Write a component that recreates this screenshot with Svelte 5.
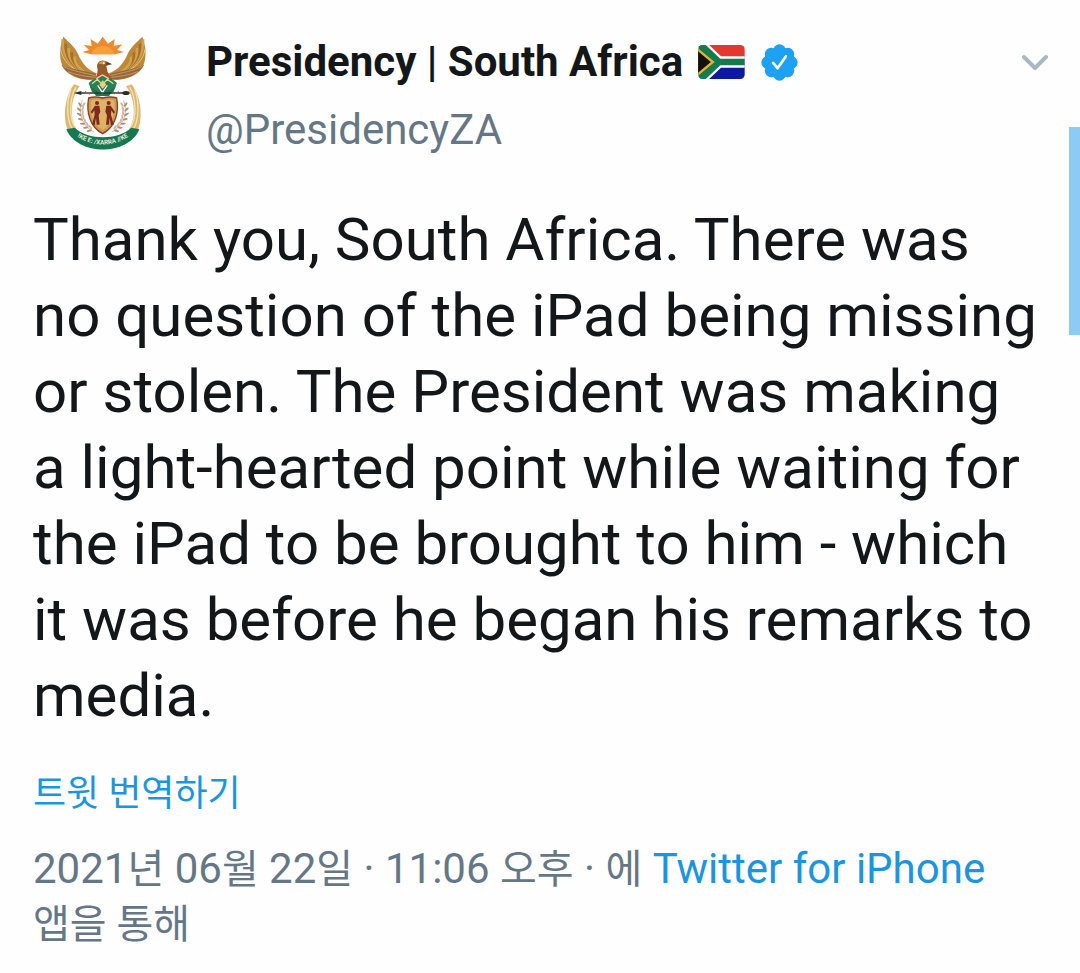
<script>
  const name = "Presidency | South Africa";
  const handle = "@PresidencyZA";
  const text =
    "Thank you, South Africa. There was no question of the iPad being missing or stolen. The President was making a light-hearted point while waiting for the iPad to be brought to him - which it was before he began his remarks to media.";

  const feathers = [0, 1, 2, 3, 4];
  const leaves = [0, 1, 2, 3, 4, 5, 6];
  const scallops = [0, 45, 90, 135, 180, 225, 270, 315];
</script>

<svelte:head>
  <title>{name}</title>
</svelte:head>

{#snippet wing()}
  <path d="M40 38 C26 75 26 118 48 142 C76 166 110 171 136 166 L140 148 C114 138 97 119 85 92 C75 68 54 52 40 38Z" fill="#bd8838" />
  {#each feathers as i}
    <path
      d="M{38 + i * 9} {46 + i * 13} C{36 + i * 9} {76 + i * 10} {46 + i * 10} {114 + i * 6} {96 + i * 8} {146 + i * 3}"
      fill="none"
      stroke={i % 2 ? "#a66f2c" : "#d0a24c"}
      stroke-width="8"
    />
  {/each}
  <path d="M32 76 C36 106 60 134 102 149" fill="none" stroke="#e4c47f" stroke-width="3" />
  <path d="M34 122 C56 134 100 138 138 150 L134 166 C96 168 54 156 34 122Z" fill="#97673a" />
  <path d="M40 127 C66 141 102 146 136 155 M54 143 C80 154 108 157 134 160" fill="none" stroke="#c09a6a" stroke-width="3" />
  <path d="M72 181 C40 222 38 296 58 326 L80 316 C58 284 61 222 89 187Z" fill="#dcb96f" />
  <path d="M63 196 C48 234 50 292 69 319 M78 189 C57 225 57 284 76 311" fill="none" stroke="#f4e2b4" stroke-width="4" />
{/snippet}

{#snippet wheat()}
  <path d="M97 229 C82 260 94 305 132 324" fill="none" stroke="#b99a78" stroke-width="2" />
  {#each leaves as i}
    <g transform="rotate({-i * 12} 158 262)">
      <ellipse cx="90" cy="242" rx="3" ry="8" transform="rotate(-35 90 242)" fill="#b28d70" />
      <ellipse cx="101" cy="242" rx="3" ry="8" transform="rotate(35 101 242)" fill="#d2b59a" />
    </g>
  {/each}
{/snippet}

{#snippet figure()}
  <circle cx="141" cy="237" r="6" />
  <path d="M135 245 L148 245 L151 263 L146 274 L149 302 L140 302 L138 282 L134 304 L126 302 L134 272 L133 259 L126 269 L122 264Z" />
{/snippet}

<main>
  <header>
    <svg class="avatar" viewBox="0 0 315 405" role="img" aria-label="Coat of arms">
      <path
        d="M97 84 L117 78 L101 62 L125 66 L122 45 L143 59 L158 38 L174 59 L194 45 L191 66 L217 61 L201 78 L222 84 L194 91 H124Z"
        fill="#f0892e"
      />
      <path d="M124 91 Q130 68 158 66 Q188 68 194 91Z" fill="#f6a03c" />
      {@render wing()}
      <g transform="translate(317 0) scale(-1 1)">{@render wing()}</g>

      <path d="M140 165 L143 136 C136 116 151 105 167 111 L184 119 L169 126 L173 145 L187 165Z" fill="#985b2a" />
      <path d="M145 119 C151 110 163 109 172 115 L163 121Z" fill="#d49640" />
      <path d="M165 113 L187 121 L170 123Z" fill="#514132" />
      <circle cx="161" cy="118" r="3" fill="#fff" />
      <path d="M145 144 L157 153 L154 166 L136 162Z M174 146 L182 163 L166 166Z" fill="#d7382f" />

      <path d="M116 177 Q157 137 201 177 L190 205 H126Z" fill="#2a8053" />
      <path d="M126 179 L142 166 L157 182 L172 166 L190 179 M139 164 L157 153 L177 164" fill="none" stroke="#d8df9c" stroke-width="4" />
      <path d="M148 182 L158 168 L169 182 L158 194Z" fill="#e9ce73" />
      <path d="M120 188 L157 209 L198 188 L177 216 H138Z" fill="#167750" />
      <path d="M143 184 L157 205 L172 184" fill="none" stroke="#fff" stroke-width="4" />
      <path d="M88 207 H224" stroke="#30302f" stroke-width="5" />
      <path d="M71 207 L94 201 V213Z" fill="#292d2d" />
      <ellipse cx="228" cy="207" rx="11" ry="6" fill="#292d2d" />
      <path d="M105 202 L119 211 M194 210 L206 202" stroke="#a47849" stroke-width="3" />

      {@render wheat()}
      <g transform="translate(317 0) scale(-1 1)">{@render wheat()}</g>

      <path d="M116 222 Q135 216 158 222 Q181 216 200 222 C208 265 196 309 158 329 C120 309 108 265 116 222Z" fill="#cf9855" stroke="#824425" stroke-width="4" />
      <path d="M124 229 Q140 224 158 229 Q176 224 192 229 C199 265 188 300 158 318 C128 300 117 265 124 229Z" fill="#dfb269" />
      <g fill="#7b2c1c">
        {@render figure()}
        <g transform="translate(317 0) scale(-1 1)">{@render figure()}</g>
      </g>

      <path d="M49 316 L74 311 C115 349 203 349 244 311 L268 316 C236 397 82 397 49 316Z" fill="#167750" />
      <path id="motto" d="M68 329 Q159 394 249 329" fill="none" />
      <text class="motto"><textPath href="#motto" startOffset="50%">!KE E: /XARRA //KE</textPath></text>
    </svg>

    <div class="author">
      <h1>
        {name}
        <svg class="flag" viewBox="0 0 140 102" role="img" aria-label="South Africa flag">
          <defs>
            <clipPath id="flag-clip"><rect width="140" height="102" rx="14" /></clipPath>
          </defs>
          <g clip-path="url(#flag-clip)">
            <path d="M0 0 H140 V51 H0Z" fill="#e2382f" />
            <path d="M0 51 H140 V102 H0Z" fill="#0b19a0" />
            <path d="M0 -8 L62 51 L0 110 M62 51 H140" fill="none" stroke="#fff" stroke-width="34" />
            <path d="M0 -8 L62 51 L0 110" fill="#147b50" />
            <path d="M0 -8 L62 51 L0 110 M60 51 H140" fill="none" stroke="#147b50" stroke-width="20" />
            <path d="M-8 8 L44 51 L-8 94Z" fill="#15110d" stroke="#e8b32b" stroke-width="7" />
          </g>
        </svg>
        <svg class="verified" viewBox="0 0 110 110" role="img" aria-label="Verified account">
          <g fill="#1da1f2">
            <circle cx="55" cy="55" r="45" />
            {#each scallops as angle}
              <circle cx="55" cy="20" r="19" transform="rotate({angle} 55 55)" />
            {/each}
          </g>
          <path d="M36 56 L49 72 L74 37" fill="none" stroke="#fff" stroke-width="8" stroke-linecap="round" stroke-linejoin="round" />
        </svg>
      </h1>
      <a class="handle" href="#profile">{handle}</a>
    </div>

    <button aria-label="More options">
      <svg viewBox="0 0 26 18">
        <path d="M2 3 L13 14 L24 3" fill="none" stroke="#aab8c2" stroke-width="4" stroke-linecap="round" stroke-linejoin="round" />
      </svg>
    </button>
  </header>

  <p class="text">{text}</p>
  <a class="translate" href="#translate" lang="ko">트윗 번역하기</a>
  <p class="meta" lang="ko">
    2021<span>년</span> 06<span>월</span> 22<span>일</span> · 11:06 <span>오후</span> · <span>에</span>
    <a href="#source">Twitter for iPhone</a>
    <span>앱을 통해</span>
  </p>
  <div class="scrollbar"></div>
</main>

<style>
  :global(body) {
    background: #fefefe;
  }
  main {
    position: relative;
    padding: 24px 34px 24px 33px;
    color: #14171a;
    font-family: Roboto, "Noto Sans CJK KR", sans-serif;
  }
  header {
    display: flex;
    align-items: flex-start;
    padding-left: 17px;
  }
  .avatar {
    width: 105px;
    height: 135px;
    flex: none;
  }
  .motto {
    fill: #e3f0df;
    font-size: 19px;
    font-weight: 700;
    text-anchor: middle;
  }
  .author {
    flex: 1;
    margin-left: 51px;
    padding-top: 8px;
  }
  h1 {
    display: flex;
    align-items: center;
    margin: 0;
    font-size: 42px;
    font-weight: 700;
    line-height: 60px;
  }
  .flag {
    width: 47px;
    height: 34px;
    margin-left: 15px;
  }
  .verified {
    width: 37px;
    height: 37px;
    margin-left: 16px;
  }
  .handle {
    display: block;
    margin-top: 8px;
    color: #657786;
    font-size: 42px;
    line-height: 60px;
  }
  a {
    color: #1b95e0;
    text-decoration: none;
  }
  button {
    margin-top: 30px;
    margin-right: -2px;
    padding: 0;
    border: none;
    background: none;
  }
  button svg {
    display: block;
    width: 26px;
    height: 18px;
  }
  .text {
    margin: 42px 0 0;
    font-size: 60px;
    line-height: 76px;
  }
  .translate {
    display: block;
    margin-top: 34px;
    font-size: 36px;
    line-height: 52px;
  }
  .meta {
    margin: 22px 0 0;
    color: #657786;
    font-size: 42px;
    line-height: 54px;
    word-break: keep-all;
  }
  .meta span {
    font-size: 40px;
  }
  .scrollbar {
    position: absolute;
    top: 127px;
    right: 0;
    width: 11px;
    height: 208px;
    background: #8bcbf6;
  }
</style>
